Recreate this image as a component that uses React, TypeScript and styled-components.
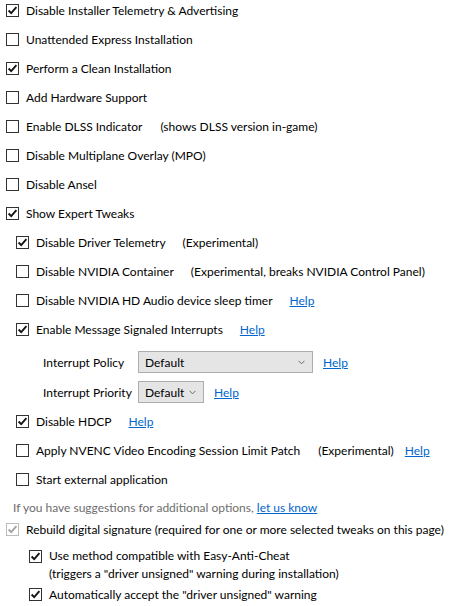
import React from 'react';
import styled, { createGlobalStyle } from 'styled-components';

const Global = createGlobalStyle`
  html, body { margin: 0; padding: 0; background: #ffffff; }
  body {
    font-family: "Segoe UI", Lato, "Noto Sans", sans-serif;
    font-size: 12px;
    color: #000000;
  }
`;

const Panel = styled.div`
  width: 458px;
  height: 606px;
  box-sizing: border-box;
  overflow: hidden;
  background: #ffffff;
  display: flex;
  flex-direction: column;
  padding: 0 0 0 6px;
`;

const Row = styled.div<{ $indent?: number; $mt?: number }>`
  display: flex;
  align-items: center;
  height: 22px;
  margin-left: ${(p) => p.$indent ?? 0}px;
  margin-top: ${(p) => p.$mt ?? 7}px;
  white-space: nowrap;
`;

const TopRow = styled.div<{ $indent?: number; $mt?: number }>`
  display: flex;
  align-items: flex-start;
  margin-left: ${(p) => p.$indent ?? 0}px;
  margin-top: ${(p) => p.$mt ?? 7}px;
  white-space: nowrap;
  line-height: 18px;
`;

const Box = styled.span<{ $disabled?: boolean }>`
  flex: none;
  width: 13px;
  height: 13px;
  box-sizing: border-box;
  border: 1px solid ${(p) => (p.$disabled ? '#bcbcbc' : '#333333')};
  background: #ffffff;
  display: flex;
  align-items: center;
  justify-content: center;
  margin-right: 7px;
`;

const TopBox = styled(Box)`
  margin-top: 3px;
`;

const Label = styled.span``;

const Note = styled.span<{ $gap?: number }>`
  margin-left: ${(p) => p.$gap ?? 17}px;
`;

const Link = styled.a<{ $gap?: number }>`
  margin-left: ${(p) => p.$gap ?? 17}px;
  color: #0066cc;
  text-decoration: underline;
  cursor: pointer;
`;

const Hint = styled.div`
  display: flex;
  align-items: center;
  height: 22px;
  margin: 6px 0 0 7px;
  color: #6d6d6d;
  white-space: nowrap;
`;

const SubGrid = styled.div`
  display: grid;
  grid-template-columns: 87px auto;
  column-gap: 8px;
  row-gap: 8px;
  justify-content: start;
  align-items: center;
  margin: 11px 0 0 37px;
  white-space: nowrap;
`;

const Controls = styled.div`
  display: flex;
  align-items: center;
  gap: 10px;
  white-space: nowrap;
`;

const Select = styled.div<{ $w: number }>`
  width: ${(p) => p.$w}px;
  height: 22px;
  box-sizing: border-box;
  border: 1px solid #adadad;
  background: #e5e5e5;
  display: flex;
  align-items: center;
  justify-content: space-between;
  padding: 0 7px 0 6px;
`;

const MultiLabel = styled.span`
  display: flex;
  flex-direction: column;
`;

const Check: React.FC<{ disabled?: boolean }> = ({ disabled }) => (
  <svg width="11" height="11" viewBox="0 0 11 11">
    <path
      d="M1.6 5.5 L4.2 8.2 L9.4 2.2"
      fill="none"
      stroke={disabled ? '#a3a3a3' : '#141414'}
      strokeWidth="1.9"
    />
  </svg>
);

const Chevron = () => (
  <svg width="7" height="5" viewBox="0 0 7 5">
    <path d="M0.5 0.8 L3.5 3.8 L6.5 0.8" fill="none" stroke="#6a6a6a" strokeWidth="1" />
  </svg>
);

type CBProps = {
  checked?: boolean;
  disabled?: boolean;
  indent?: number;
  mt?: number;
  label: string;
  children?: React.ReactNode;
};

const CheckRow: React.FC<CBProps> = ({ checked, disabled, indent, mt, label, children }) => (
  <Row $indent={indent} $mt={mt}>
    <Box $disabled={disabled}>{checked && <Check disabled={disabled} />}</Box>
    <Label>{label}</Label>
    {children}
  </Row>
);

export default function App() {
  return (
    <>
      <Global />
      <Panel>
        <CheckRow checked mt={0} label="Disable Installer Telemetry & Advertising" />
        <CheckRow label="Unattended Express Installation" />
        <CheckRow checked label="Perform a Clean Installation" />
        <CheckRow label="Add Hardware Support" />
        <CheckRow label="Enable DLSS Indicator">
          <Note $gap={18}>(shows DLSS version in-game)</Note>
        </CheckRow>
        <CheckRow label="Disable Multiplane Overlay (MPO)" />
        <CheckRow label="Disable Ansel" />
        <CheckRow checked label="Show Expert Tweaks" />
        <CheckRow checked indent={10} label="Disable Driver Telemetry">
          <Note>(Experimental)</Note>
        </CheckRow>
        <CheckRow indent={10} label="Disable NVIDIA Container">
          <Note>(Experimental, breaks NVIDIA Control Panel)</Note>
        </CheckRow>
        <CheckRow indent={10} label="Disable NVIDIA HD Audio device sleep timer">
          <Link>Help</Link>
        </CheckRow>
        <CheckRow checked indent={10} label="Enable Message Signaled Interrupts">
          <Link>Help</Link>
        </CheckRow>
        <SubGrid>
          <span>Interrupt Policy</span>
          <Controls>
            <Select $w={175}>
              <span>Default</span>
              <Chevron />
            </Select>
            <Link $gap={0}>Help</Link>
          </Controls>
          <span>Interrupt Priority</span>
          <Controls>
            <Select $w={66}>
              <span>Default</span>
              <Chevron />
            </Select>
            <Link $gap={0}>Help</Link>
          </Controls>
        </SubGrid>
        <CheckRow checked indent={10} label="Disable HDCP">
          <Link>Help</Link>
        </CheckRow>
        <CheckRow indent={10} label="Apply NVENC Video Encoding Session Limit Patch">
          <Note $gap={18}>(Experimental)</Note>
          <Link $gap={11}>Help</Link>
        </CheckRow>
        <CheckRow indent={10} label="Start external application" />
        <Hint>
          If you have suggestions for additional options,&nbsp;<Link $gap={0}>let us know</Link>
        </Hint>
        <CheckRow
          checked
          disabled
          mt={1}
          label="Rebuild digital signature (required for one or more selected tweaks on this page)"
        />
        <TopRow $indent={23} $mt={6}>
          <TopBox>
            <Check />
          </TopBox>
          <MultiLabel>
            <span>Use method compatible with Easy-Anti-Cheat</span>
            <span>(triggers a "driver unsigned" warning during installation)</span>
          </MultiLabel>
        </TopRow>
        <CheckRow checked indent={23} mt={1} label='Automatically accept the "driver unsigned" warning' />
      </Panel>
    </>
  );
}
